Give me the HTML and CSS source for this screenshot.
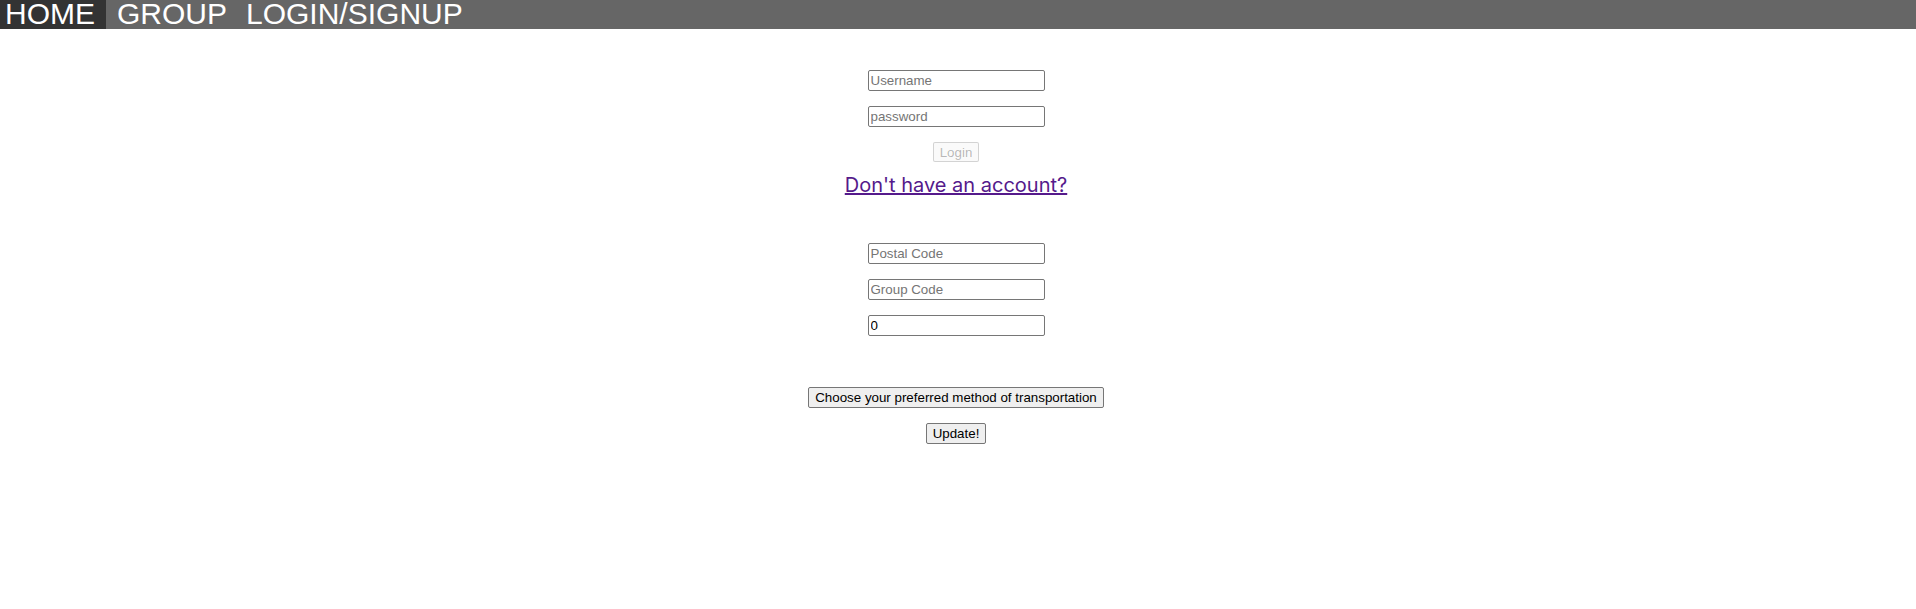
FILE: index.html
```html
<!DOCTYPE html>
<html lang="en">
<head>
<meta charset="utf-8">
<title>Home</title>
<link rel="stylesheet" href="styles.css">
</head>
<body>
<nav class="topnav">
  <a class="nav-link active" href="#">HOME</a>
  <a class="nav-link" href="#">GROUP</a>
  <a class="nav-link" href="#">LOGIN/SIGNUP</a>
</nav>
<main class="page">
  <form class="form login-form">
    <input class="field first" type="text" placeholder="Username">
    <input class="field" type="password" placeholder="password">
    <button class="btn" type="button" disabled>Login</button>
    <a class="signup-link" href="#">Don't have an account?</a>
  </form>
  <form class="form update-form">
    <input class="field first" type="text" placeholder="Postal Code">
    <input class="field" type="text" placeholder="Group Code">
    <input class="field" type="number" value="0">
    <button class="btn choose" type="button">Choose your preferred method of transportation</button>
    <button class="btn" type="button">Update!</button>
  </form>
</main>
</body>
</html>
```
FILE: styles.css
```css
html, body {
  margin: 0;
  padding: 0;
  background: #ffffff;
}

body {
  font-family: "Liberation Sans", Arial, sans-serif;
}

.topnav {
  display: flex;
  background: #666666;
  height: 29px;
}

.nav-link {
  display: block;
  color: #ffffff;
  text-decoration: none;
  font-family: "Liberation Sans", Arial, sans-serif;
  font-size: 30px;
  line-height: 27px;
  padding: 0 8px 2px 11px;
}

.nav-link.active {
  background: #333333;
  padding: 0 11px 2px 5px;
}

.page {
  display: flex;
  flex-direction: column;
  align-items: center;
  padding: 41px 4px 0 0;
}

.form {
  display: flex;
  flex-direction: column;
  align-items: center;
}

.field {
  box-sizing: border-box;
  width: 177px;
  height: 21px;
  margin: 15px 0 0;
  padding: 1px 2px;
  border: 1px solid #767676;
  border-radius: 2px;
  font-family: "Liberation Sans", Arial, sans-serif;
  font-size: 13.333px;
  color: #000000;
  background: #ffffff;
  outline: none;
}

.field.first {
  margin-top: 0;
}

.field::placeholder {
  color: #757575;
}

.field[type="number"]::-webkit-inner-spin-button,
.field[type="number"]::-webkit-outer-spin-button {
  -webkit-appearance: none;
  margin: 0;
}

.btn {
  box-sizing: border-box;
  height: 21px;
  margin: 15px 0 0;
  padding: 1px 6px;
  border: 1px solid #767676;
  border-radius: 2px;
  background: #efefef;
  color: #000000;
  font-family: "Liberation Sans", Arial, sans-serif;
  font-size: 13.333px;
  line-height: 15px;
}

.btn:disabled {
  height: 20px;
  background: rgba(239, 239, 239, 0.3);
  border-color: rgba(118, 118, 118, 0.3);
  color: rgba(16, 16, 16, 0.3);
}

.signup-link {
  display: block;
  margin-top: 11px;
  font-family: Inter, "Noto Sans", sans-serif;
  font-size: 20px;
  color: #551a8b;
  text-decoration: underline;
}

.update-form {
  margin-top: 46px;
}

.btn.choose {
  margin-top: 51px;
}
```
